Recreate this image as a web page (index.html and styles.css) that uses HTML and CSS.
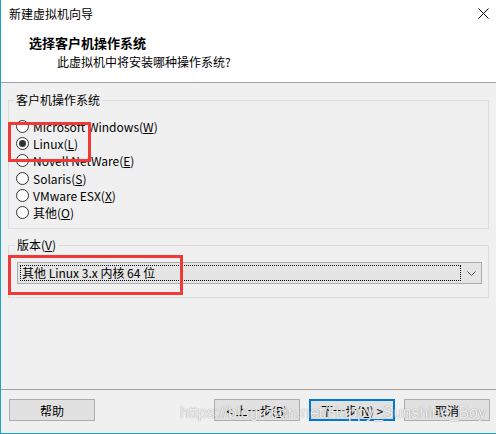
FILE: index.html
```html
<!DOCTYPE html>
<html lang="zh-CN">
<head>
    <meta charset="UTF-8">
    <title>新建虚拟机向导</title>
    <link rel="stylesheet" href="styles.css">
</head>
<body>

    <div class="window">
        <div class="titlebar">
            <span class="title">新建虚拟机向导</span>
            <svg class="close" width="11" height="11" viewBox="0 0 11 11">
                <path d="M0.5 0.5L10.5 10.5M10.5 0.5L0.5 10.5" stroke="#000" stroke-width="1" fill="none"/>
            </svg>
        </div>

        <div class="header">
            <div class="heading">选择客户机操作系统</div>
            <div class="subtitle">此虚拟机中将安装哪种操作系统?</div>
        </div>

        <div class="content">
            <fieldset class="group os-group">
                <legend>客户机操作系统</legend>
                <label class="radio"><span class="circle"></span>Microsoft Windows(<u>W</u>)</label>
                <label class="radio checked"><span class="circle"></span>Linux(<u>L</u>)</label>
                <label class="radio"><span class="circle"></span>Novell NetWare(<u>E</u>)</label>
                <label class="radio"><span class="circle"></span>Solaris(<u>S</u>)</label>
                <label class="radio"><span class="circle"></span>VMware ESX(<u>X</u>)</label>
                <label class="radio"><span class="circle"></span>其他(<u>O</u>)</label>
            </fieldset>

            <fieldset class="group version-group">
                <legend>版本(<u>V</u>)</legend>
                <div class="select">
                    <span class="select-value">其他 Linux 3.x 内核 64 位</span>
                    <svg class="chevron" width="9" height="5" viewBox="0 0 9 5">
                        <path d="M0.5 0.5L4.5 4.5L8.5 0.5" stroke="#555" stroke-width="1" fill="none"/>
                    </svg>
                </div>
            </fieldset>
        </div>

        <div class="footer">
            <button class="btn">帮助</button>
            <button class="btn back">&lt; 上一步(<u>B</u>)</button>
            <button class="btn primary">下一步(<u>N</u>) &gt;</button>
            <button class="btn">取消</button>
        </div>

        <!-- annotations drawn over the dialog -->
        <div class="mark mark-os"></div>
        <div class="mark mark-version"></div>
        <div class="watermark">https://blog.csdn.net/Happy_Sunshine_Boy</div>
    </div>

</body>
</html>
```

FILE: styles.css
```css
body {
    margin: 0;
    padding: 0;
    background-color: #f0f0f0;
}
.window {
    position: relative;
    width: 496px;
    height: 434px;
    box-sizing: border-box;
    border-left: 1px solid #1ba3c6;
    border-bottom: 1px solid #1ba3c6;
    background-color: #f0f0f0;
    display: flex;
    flex-direction: column;
    font-family: "Noto Sans CJK SC", "Noto Sans", sans-serif;
    font-size: 12px;
    color: #000;
    overflow: hidden;
}
.titlebar {
    height: 28px;
    flex-shrink: 0;
    background-color: #fff;
    display: flex;
    align-items: center;
    justify-content: space-between;
    padding: 0 7px 0 8px;
}
.title {
    line-height: 16px;
}
.close {
    margin-top: -2px;
}
.header {
    height: 55px;
    flex-shrink: 0;
    box-sizing: border-box;
    background-color: #fff;
    border-bottom: 1px solid #a0a0a0;
    padding-left: 28px;
}
.heading {
    margin-top: 6px;
    font-size: 13px;
    font-weight: bold;
    line-height: 18px;
}
.subtitle {
    margin-top: 1px;
    padding-left: 28px;
    line-height: 18px;
}
.content {
    flex: 1;
    padding: 0 7px;
}
.group {
    margin: 0;
    border: 1px solid #dcdcdc;
    padding: 0 6px 0 7px;
}
.group legend {
    margin-left: -2px;
    padding: 0 2px;
    line-height: 16px;
}
.os-group {
    margin-top: 9px;
    padding-top: 10px;
    padding-bottom: 7px;
}
.radio {
    display: flex;
    align-items: center;
    height: 17.2px;
    white-space: nowrap;
}
.circle {
    width: 13px;
    height: 13px;
    box-sizing: border-box;
    border: 1px solid #333;
    border-radius: 50%;
    background-color: #fff;
    margin-right: 4px;
    display: flex;
    align-items: center;
    justify-content: center;
}
.checked .circle::after {
    content: "";
    width: 7px;
    height: 7px;
    border-radius: 50%;
    background-color: #333;
}
.version-group {
    margin-top: 8px;
    padding: 9px 6px 13px 8px;
}
.select {
    height: 22px;
    box-sizing: border-box;
    border: 1px solid #acacac;
    background-color: #e5e5e5;
    display: flex;
    align-items: center;
    padding: 2px 5px 2px 2px;
}
.select-value {
    flex: 1;
    height: 16px;
    box-sizing: border-box;
    border: 1px dotted #000;
    line-height: 14px;
    padding-left: 1px;
    margin-right: 6px;
}
.chevron {
    display: block;
}
.footer {
    height: 44px;
    flex-shrink: 0;
    box-sizing: border-box;
    border-top: 1px solid #a0a0a0;
    display: flex;
    align-items: flex-start;
    gap: 9px;
    padding: 9px 6px 0 8px;
}
.btn {
    width: 86px;
    height: 22px;
    box-sizing: border-box;
    border: 1px solid #adadad;
    background-color: #e1e1e1;
    font-family: inherit;
    font-size: 12px;
    color: #000;
    padding: 0;
}
.back {
    margin-left: auto;
}
.primary {
    border: 2px solid #0078d7;
}
.mark {
    position: absolute;
    border: 3px solid #f03a3a;
    box-sizing: border-box;
}
.mark-os {
    left: 7px;
    top: 122px;
    width: 83px;
    height: 40px;
}
.mark-version {
    left: 7px;
    top: 255px;
    width: 175px;
    height: 40px;
}
.watermark {
    position: absolute;
    right: 10px;
    bottom: 11px;
    font-family: "Liberation Sans", Arial, sans-serif;
    font-size: 16px;
    color: rgba(255, 255, 255, 0.9);
    text-shadow: 0 0 1px rgba(0, 0, 0, 0.5);
    pointer-events: none;
}
```
